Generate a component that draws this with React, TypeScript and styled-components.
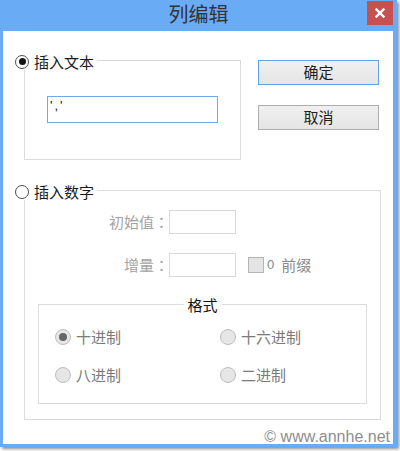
import React from "react";
import styled, { createGlobalStyle } from "styled-components";

const Global = createGlobalStyle`
  html, body { margin: 0; padding: 0; background: #fff; }
  body {
    width: 400px;
    height: 451px;
    overflow: hidden;
    font-family: "Noto Sans CJK SC", "Noto Sans", sans-serif;
  }
`;

const Window = styled.div`
  position: relative;
  width: 397px;
  height: 447px;
  box-sizing: border-box;
  background: #6aabf5;
  display: flex;
  flex-direction: column;
  box-shadow: 2px 2px 3px rgba(0, 0, 0, 0.45);
`;

const TitleBar = styled.div`
  height: 31px;
  flex: none;
  display: grid;
  grid-template-columns: 1fr auto 1fr;
  align-items: start;
`;

const Title = styled.div`
  grid-column: 2;
  font-size: 20px;
  line-height: 27px;
  color: #333;
`;

const CloseButton = styled.div`
  grid-column: 3;
  justify-self: end;
  margin: 1px 4px 0 0;
  width: 26px;
  height: 24px;
  background: #c75050;
  display: flex;
  align-items: center;
  justify-content: center;
`;

const Client = styled.div`
  flex: 1;
  margin: 0 4px 3px 3px;
  background: #fff;
  padding: 29px 0 0 21px;
  display: flex;
  flex-direction: column;
`;

const TopRow = styled.div`
  display: flex;
  align-items: flex-start;
  gap: 17px;
`;

const GroupBox = styled.div<{ $w: number; $h: number }>`
  position: relative;
  box-sizing: border-box;
  width: ${(p) => p.$w}px;
  height: ${(p) => p.$h}px;
  border: 1px solid #dcdcdc;
`;

const TextGroup = styled(GroupBox)`
  padding: 35px 0 0 22px;
`;

const NumberGroup = styled(GroupBox)`
  margin-top: 30px;
  padding-top: 19px;
  display: flex;
  flex-direction: column;
`;

const Legend = styled.div`
  position: absolute;
  left: -10px;
  top: -8px;
  height: 17px;
  display: flex;
  align-items: center;
  gap: 5px;
  padding-right: 3px;
  background: #fff;
  font-size: 15px;
  line-height: 17px;
  color: #1a1a1a;
`;

const MainRadio = styled.span<{ $checked?: boolean }>`
  box-sizing: border-box;
  width: 14px;
  height: 14px;
  border-radius: 50%;
  border: 1px solid #4d4d4d;
  background: #fff;
  display: flex;
  align-items: center;
  justify-content: center;
  &::after {
    content: "";
    display: ${(p) => (p.$checked ? "block" : "none")};
    width: 7px;
    height: 7px;
    border-radius: 50%;
    background: #151515;
  }
`;

const TextField = styled.div`
  box-sizing: border-box;
  width: 171px;
  height: 27px;
  padding: 1px 2px 0 2px;
  border: 1px solid #6fa9ea;
  font-family: "Liberation Sans", Arial, sans-serif;
  font-size: 13px;
  line-height: 15px;
  letter-spacing: 2px;
  color: #111;
  background: #fff;
`;

const ButtonColumn = styled.div`
  display: flex;
  flex-direction: column;
  gap: 20px;
`;

const Button = styled.div<{ $default?: boolean }>`
  box-sizing: border-box;
  width: 121px;
  height: 25px;
  border: 1px solid ${(p) => (p.$default ? "#5fa3e6" : "#adadad")};
  background: linear-gradient(#f0f0f0, #e5e5e5);
  font-size: 15px;
  line-height: 22px;
  color: #1e1e1e;
  text-align: center;
`;

const FormGrid = styled.div`
  display: grid;
  grid-template-columns: 144px 67px auto;
  row-gap: 19px;
  align-items: center;
`;

const FieldLabel = styled.div`
  text-align: right;
  font-size: 15px;
  line-height: 20px;
  color: #a3a3a3;
`;

const Colon = styled.span`
  font-family: "Noto Sans CJK TC", "Noto Sans CJK SC", sans-serif;
`;

const SmallInput = styled.div`
  box-sizing: border-box;
  width: 67px;
  height: 24px;
  border: 1px solid #d9d9d9;
  background: #fff;
`;

const PrefixOption = styled.div`
  margin-left: 12px;
  display: flex;
  align-items: center;
  gap: 3px;
  color: #8a8a8a;
  font-size: 15px;
  line-height: 18px;
`;

const CheckBox = styled.span`
  box-sizing: border-box;
  width: 16px;
  height: 16px;
  border: 1px solid #b5b5b5;
  background: #e4e4e4;
`;

const Zero = styled.span`
  font-family: "Liberation Sans", Arial, sans-serif;
  font-size: 13px;
  color: #7d8796;
  margin-right: 4px;
`;

const FormatBox = styled.div`
  position: relative;
  box-sizing: border-box;
  height: 100px;
  margin: 27px 13px 0 13px;
  border: 1px solid #dcdcdc;
  padding: 24px 0 0 16px;
`;

const FormatLegend = styled.div`
  position: absolute;
  top: -9px;
  left: 50%;
  transform: translateX(-50%);
  padding: 0 4px;
  background: #fff;
  font-size: 15px;
  line-height: 17px;
  color: #111;
`;

const FormatGrid = styled.div`
  display: grid;
  grid-template-columns: 165px auto;
  row-gap: 22px;
`;

const FormatOption = styled.div`
  display: flex;
  align-items: center;
  gap: 5px;
  font-size: 15px;
  line-height: 16px;
  color: #7a7a7a;
`;

const FormatRadio = styled.span<{ $checked?: boolean }>`
  box-sizing: border-box;
  width: 16px;
  height: 16px;
  border-radius: 50%;
  border: 1px solid #bdbdbd;
  background: #e6e6e6;
  display: flex;
  align-items: center;
  justify-content: center;
  &::after {
    content: "";
    display: ${(p) => (p.$checked ? "block" : "none")};
    width: 8px;
    height: 8px;
    border-radius: 50%;
    background: #666;
  }
`;

const Watermark = styled.div`
  position: absolute;
  right: 7px;
  bottom: 1px;
  font-family: "Liberation Sans", Arial, sans-serif;
  font-size: 16px;
  line-height: 18px;
  color: #8e8e8e;
  text-shadow: 0 0 1px #fff;
`;

const formats = [
  { label: "十进制", checked: true },
  { label: "十六进制", checked: false },
  { label: "八进制", checked: false },
  { label: "二进制", checked: false },
];

export default function App() {
  return (
    <>
      <Global />
      <Window>
        <TitleBar>
          <Title>列编辑</Title>
          <CloseButton>
            <svg width="10" height="10" viewBox="0 0 10 10">
              <path d="M1.5 1.5 L8.5 8.5 M8.5 1.5 L1.5 8.5" stroke="#fff" strokeWidth="2.4" strokeLinecap="square" />
            </svg>
          </CloseButton>
        </TitleBar>
        <Client>
          <TopRow>
            <TextGroup $w={217} $h={100}>
              <Legend>
                <MainRadio $checked />
                插入文本
              </Legend>
              <TextField>','</TextField>
            </TextGroup>
            <ButtonColumn>
              <Button $default>确定</Button>
              <Button>取消</Button>
            </ButtonColumn>
          </TopRow>
          <NumberGroup $w={357} $h={230}>
            <Legend>
              <MainRadio />
              插入数字
            </Legend>
            <FormGrid>
              <FieldLabel>
                初始值<Colon>：</Colon>
              </FieldLabel>
              <SmallInput />
              <span />
              <FieldLabel>
                增量<Colon>：</Colon>
              </FieldLabel>
              <SmallInput />
              <PrefixOption>
                <CheckBox />
                <Zero>0</Zero>前缀
              </PrefixOption>
            </FormGrid>
            <FormatBox>
              <FormatLegend>格式</FormatLegend>
              <FormatGrid>
                {formats.map((f) => (
                  <FormatOption key={f.label}>
                    <FormatRadio $checked={f.checked} />
                    {f.label}
                  </FormatOption>
                ))}
              </FormatGrid>
            </FormatBox>
          </NumberGroup>
        </Client>
        <Watermark>© www.annhe.net</Watermark>
      </Window>
    </>
  );
}
